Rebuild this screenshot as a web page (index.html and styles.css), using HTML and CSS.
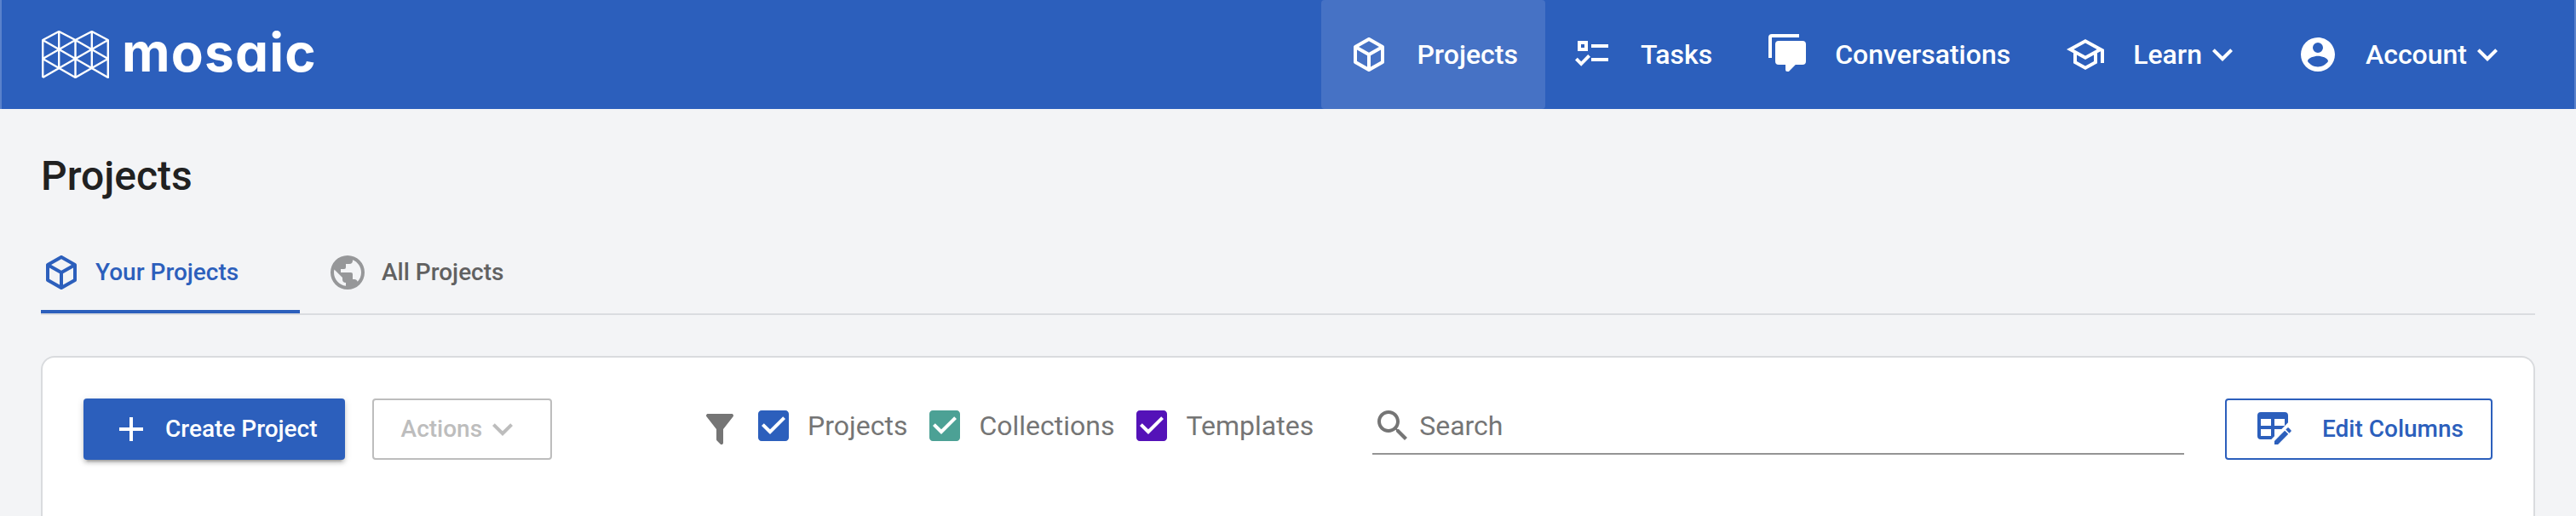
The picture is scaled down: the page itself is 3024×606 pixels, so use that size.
FILE: index.html
```html
<!DOCTYPE html>
<html lang="en">
<head>
<meta charset="utf-8">
<title>Mosaic – Projects</title>
<link rel="stylesheet" href="styles.css">
</head>
<body>
<header class="header">
  <a class="brand">
    <svg class="brand-mark" viewBox="0 0 80 56"><path d="M1.2 55V11L20.2 1L39.5 11L58.8 1L77.8 11V55L39.5 33L1.2 11M1.2 33L39.5 11L77.8 33L39.5 55L1.2 33M1.2 55L39.5 33L77.8 11M20.2 1V44M39.5 11V55M58.8 1V44"/></svg>
    <span class="brand-name">mosaic</span>
  </a>
  <nav class="nav">
    <a class="nav-item active"><svg class="icon" viewBox="0 0 24 24"><path d="M21,16.5C21,16.88 20.79,17.21 20.47,17.38L12.57,21.82C12.41,21.94 12.21,22 12,22C11.79,22 11.59,21.94 11.43,21.82L3.53,17.38C3.21,17.21 3,16.88 3,16.5V7.5C3,7.12 3.21,6.79 3.53,6.62L11.43,2.18C11.59,2.06 11.79,2 12,2C12.21,2 12.41,2.06 12.57,2.18L20.47,6.62C20.79,6.79 21,7.12 21,7.5V16.5M12,4.15L6.04,7.5L12,10.85L17.96,7.5L12,4.15M5,15.91L11,19.29V12.58L5,9.21V15.91M19,15.91V9.21L13,12.58V19.29L19,15.91Z"/></svg><span>Projects</span></a>
    <a class="nav-item"><svg class="icon" viewBox="0 0 24 24"><path d="M3,4H9V10H3V4M5,6V8H7V6H5M11,6H21V8H11V6M11,14H21V16H11V14M5.1,18.9L1.5,15.3L2.9,13.9L5.1,16.1L9.1,12L10.5,13.4L5.1,18.9Z"/></svg><span>Tasks</span></a>
    <a class="nav-item"><svg class="icon raised" viewBox="0 0 24 24"><path d="M12,23A1,1 0 0,1 11,22V19H7A2,2 0 0,1 5,17V7A2,2 0 0,1 7,5H21A2,2 0 0,1 23,7V17A2,2 0 0,1 21,19H16.9L13.2,22.71C13,22.89 12.76,23 12.5,23H12M3,15H1V3A2,2 0 0,1 3,1H19V3H3V15Z"/></svg><span>Conversations</span></a>
    <a class="nav-item"><svg class="icon" viewBox="0 0 24 24"><path d="M12 3L1 9L5 11.18V17.18L12 21L19 17.18V11.18L21 10.09V17H23V9L12 3M18.82 9L12 12.72L5.18 9L12 5.28L18.82 9M17 16L12 18.72L7 16V12.27L12 15L17 12.27V16Z"/></svg><span>Learn</span><svg class="icon chevron" viewBox="0 0 24 24"><path d="M7.41,8.58L12,13.17L16.59,8.58L18,10L12,16L6,10L7.41,8.58Z"/></svg></a>
    <a class="nav-item"><svg class="icon" viewBox="0 0 24 24"><path d="M12,19.2C9.5,19.2 7.29,17.92 6,16C6.03,14 10,12.9 12,12.9C14,12.9 17.97,14 18,16C16.71,17.92 14.5,19.2 12,19.2M12,5A3,3 0 0,1 15,8A3,3 0 0,1 12,11A3,3 0 0,1 9,8A3,3 0 0,1 12,5M12,2A10,10 0 0,0 2,12A10,10 0 0,0 12,22A10,10 0 0,0 22,12C22,6.47 17.5,2 12,2Z"/></svg><span>Account</span><svg class="icon chevron" viewBox="0 0 24 24"><path d="M7.41,8.58L12,13.17L16.59,8.58L18,10L12,16L6,10L7.41,8.58Z"/></svg></a>
  </nav>
</header>
<main class="page">
  <h1 class="title">Projects</h1>
  <div class="tabs">
    <a class="tab selected"><svg class="icon" viewBox="0 0 24 24"><path d="M21,16.5C21,16.88 20.79,17.21 20.47,17.38L12.57,21.82C12.41,21.94 12.21,22 12,22C11.79,22 11.59,21.94 11.43,21.82L3.53,17.38C3.21,17.21 3,16.88 3,16.5V7.5C3,7.12 3.21,6.79 3.53,6.62L11.43,2.18C11.59,2.06 11.79,2 12,2C12.21,2 12.41,2.06 12.57,2.18L20.47,6.62C20.79,6.79 21,7.12 21,7.5V16.5M12,4.15L6.04,7.5L12,10.85L17.96,7.5L12,4.15M5,15.91L11,19.29V12.58L5,9.21V15.91M19,15.91V9.21L13,12.58V19.29L19,15.91Z"/></svg><span>Your Projects</span></a>
    <a class="tab"><svg class="icon globe" viewBox="0 0 24 24"><path d="M17.9,17.39C17.64,16.59 16.89,16 16,16H15V13A1,1 0 0,0 14,12H8V10H10A1,1 0 0,0 11,9V7H13A2,2 0 0,0 15,5V4.59C17.93,5.77 20,8.64 20,12C20,14.08 19.2,15.97 17.9,17.39M11,19.93C7.05,19.44 4,16.08 4,12C4,11.38 4.08,10.78 4.21,10.21L9,15V16A2,2 0 0,0 11,18M12,2A10,10 0 0,0 2,12A10,10 0 0,0 12,22A10,10 0 0,0 22,12A10,10 0 0,0 12,2Z"/></svg><span>All Projects</span></a>
  </div>
  <section class="card">
    <button class="btn primary"><svg class="icon" viewBox="0 0 24 24"><path d="M19,13H13V19H11V13H5V11H11V5H13V11H19V13Z"/></svg><span>Create Project</span></button>
    <button class="btn muted"><span>Actions</span><svg class="icon" viewBox="0 0 24 24"><path d="M7.41,8.58L12,13.17L16.59,8.58L18,10L12,16L6,10L7.41,8.58Z"/></svg></button>
    <div class="filters">
      <svg class="icon funnel" viewBox="0 0 24 24"><path d="M14,12V19.88C14.04,20.18 13.94,20.5 13.71,20.71C13.32,21.1 12.69,21.1 12.3,20.71L10.29,18.7C10.06,18.47 9.96,18.16 10,17.87V12H9.97L4.21,4.62C3.87,4.19 3.95,3.56 4.38,3.22C4.57,3.08 4.78,3 5,3H19C19.22,3 19.43,3.08 19.62,3.22C20.05,3.56 20.13,4.19 19.79,4.62L14.03,12H14Z"/></svg>
      <label class="check"><svg class="icon blue" viewBox="0 0 24 24"><path d="M19 3H5c-1.11 0-2 .9-2 2v14c0 1.1.89 2 2 2h14c1.11 0 2-.9 2-2V5c0-1.1-.89-2-2-2zm-9 14l-5-5 1.41-1.41L10 14.17l7.59-7.59L19 8l-9 9z"/></svg><span>Projects</span></label>
      <label class="check"><svg class="icon teal" viewBox="0 0 24 24"><path d="M19 3H5c-1.11 0-2 .9-2 2v14c0 1.1.89 2 2 2h14c1.11 0 2-.9 2-2V5c0-1.1-.89-2-2-2zm-9 14l-5-5 1.41-1.41L10 14.17l7.59-7.59L19 8l-9 9z"/></svg><span>Collections</span></label>
      <label class="check"><svg class="icon purple" viewBox="0 0 24 24"><path d="M19 3H5c-1.11 0-2 .9-2 2v14c0 1.1.89 2 2 2h14c1.11 0 2-.9 2-2V5c0-1.1-.89-2-2-2zm-9 14l-5-5 1.41-1.41L10 14.17l7.59-7.59L19 8l-9 9z"/></svg><span>Templates</span></label>
    </div>
    <div class="search"><svg class="icon" viewBox="0 0 24 24"><path d="M15.5 14h-.79l-.28-.27C15.41 12.59 16 11.11 16 9.5 16 5.91 13.09 3 9.5 3S3 5.91 3 9.5 5.91 16 9.5 16c1.61 0 3.09-.59 4.23-1.57l.27.28v.79l5 4.99L20.49 19l-4.99-5zm-6 0C7.01 14 5 11.99 5 9.5S7.01 5 9.5 5 14 7.01 14 9.5 11.99 14 9.5 14z"/></svg><span>Search</span></div>
    <button class="btn outline"><svg class="icon" viewBox="0 0 24 24"><path d="M21.7,13.35L20.7,14.35L18.65,12.3L19.65,11.3C19.86,11.08 20.21,11.08 20.42,11.3L21.7,12.58C21.92,12.79 21.92,13.14 21.7,13.35M12,18.94V21H14.06L20.12,14.88L18.07,12.83L12,18.94M4,2H18A2,2 0 0,1 20,4V8.17L16.17,12H12V16.17L10.17,18H4A2,2 0 0,1 2,16V4A2,2 0 0,1 4,2M4,6V10H10V6H4M12,6V10H18V6H12M4,12V16H10V12H4Z"/></svg><span>Edit Columns</span></button>
  </section>
</main>
</body>
</html>
```
FILE: styles.css
```css
* { box-sizing: border-box; }
body {
  display: flex;
  flex-direction: column;
  margin: 0;
  height: 606px;
  background: #f3f4f6;
  font-family: Roboto, "Liberation Sans", sans-serif;
  font-size: 32px;
  color: #212121;
}
.icon { display: block; flex: none; width: 48px; height: 48px; fill: currentColor; }
.header {
  display: flex;
  flex: none;
  justify-content: space-between;
  align-items: stretch;
  height: 128px;
  padding: 0 46px;
  border: solid #5a82cb;
  border-width: 0 2px;
  background: #2c5fbc;
  color: #fff;
}
.brand { display: flex; align-items: flex-start; padding: 36px 0 0 1px; }
.brand-mark { width: 80px; height: 56px; fill: none; stroke: #fff; stroke-width: 2.4; stroke-linejoin: round; }
.brand-name {
  margin: -12px 0 0 14px;
  font: 700 62px/76px Inter, Lato, sans-serif;
  font-feature-settings: "cv11";
  letter-spacing: 1.2px;
}
.nav { display: flex; }
.nav-item { display: flex; align-items: center; gap: 32px; padding: 0 32px; font-weight: 500; }
.nav-item.active { background: #4672c5; border-radius: 4px; }
.nav-item .chevron { margin-left: -32px; }
.raised { margin-top: -4px; }
.page { display: flex; flex: 1; flex-direction: column; min-height: 0; padding: 0 48px; }
.title { flex: none; margin: 0; padding-top: 51px; height: 152px; font-size: 48px; line-height: 56px; font-weight: 500; }
.tabs { display: flex; flex: none; gap: 32px; height: 90px; border-bottom: 2px solid #dadce0; }
.tab { display: flex; align-items: flex-start; gap: 16px; height: 88px; padding-top: 16px; font-size: 28px; line-height: 48px; font-weight: 500; color: #616161; }
.tab.selected { width: 304px; border-bottom: 4px solid #2c5fbc; color: #2c5fbc; }
.globe { color: #969799; }
.card {
  display: flex;
  flex: 1;
  align-items: flex-start;
  min-height: 0;
  margin-top: 48px;
  padding: 48px 48px 0;
  border: 2px solid #d9dbde;
  border-bottom: 0;
  border-radius: 16px 16px 0 0;
  background: #fff;
}
.btn {
  display: flex;
  align-items: center;
  height: 72px;
  padding: 0 32px;
  border: 0;
  border-radius: 4px;
  background: none;
  font: 500 28px/48px Roboto, "Liberation Sans", sans-serif;
  white-space: nowrap;
}
.primary { gap: 16px; background: #2c5fbc; color: #fff; box-shadow: 0 6px 2px -4px rgba(0,0,0,.2), 0 4px 4px rgba(0,0,0,.14), 0 2px 10px rgba(0,0,0,.12); }
.muted { margin-left: 32px; border: 2px solid #bdbdbd; color: #bdbdbd; }
.outline { gap: 32px; margin-left: 48px; border: 2px solid #2c5fbc; color: #2c5fbc; }
.filters { display: flex; margin-left: 173px; color: #757575; }
.funnel { margin: 12px 15px 0 0; }
.check { display: flex; gap: 16px; height: 48px; margin: 8px 20px 0 0; line-height: 48px; }
.blue { color: #2c5fbc; }
.teal { color: #4ca195; }
.purple { color: #5412b8; }
.search { display: flex; flex: 1; gap: 7px; height: 66px; margin-left: 49px; padding-top: 8px; border-bottom: 2px solid #949494; line-height: 48px; color: #757575; }
```
